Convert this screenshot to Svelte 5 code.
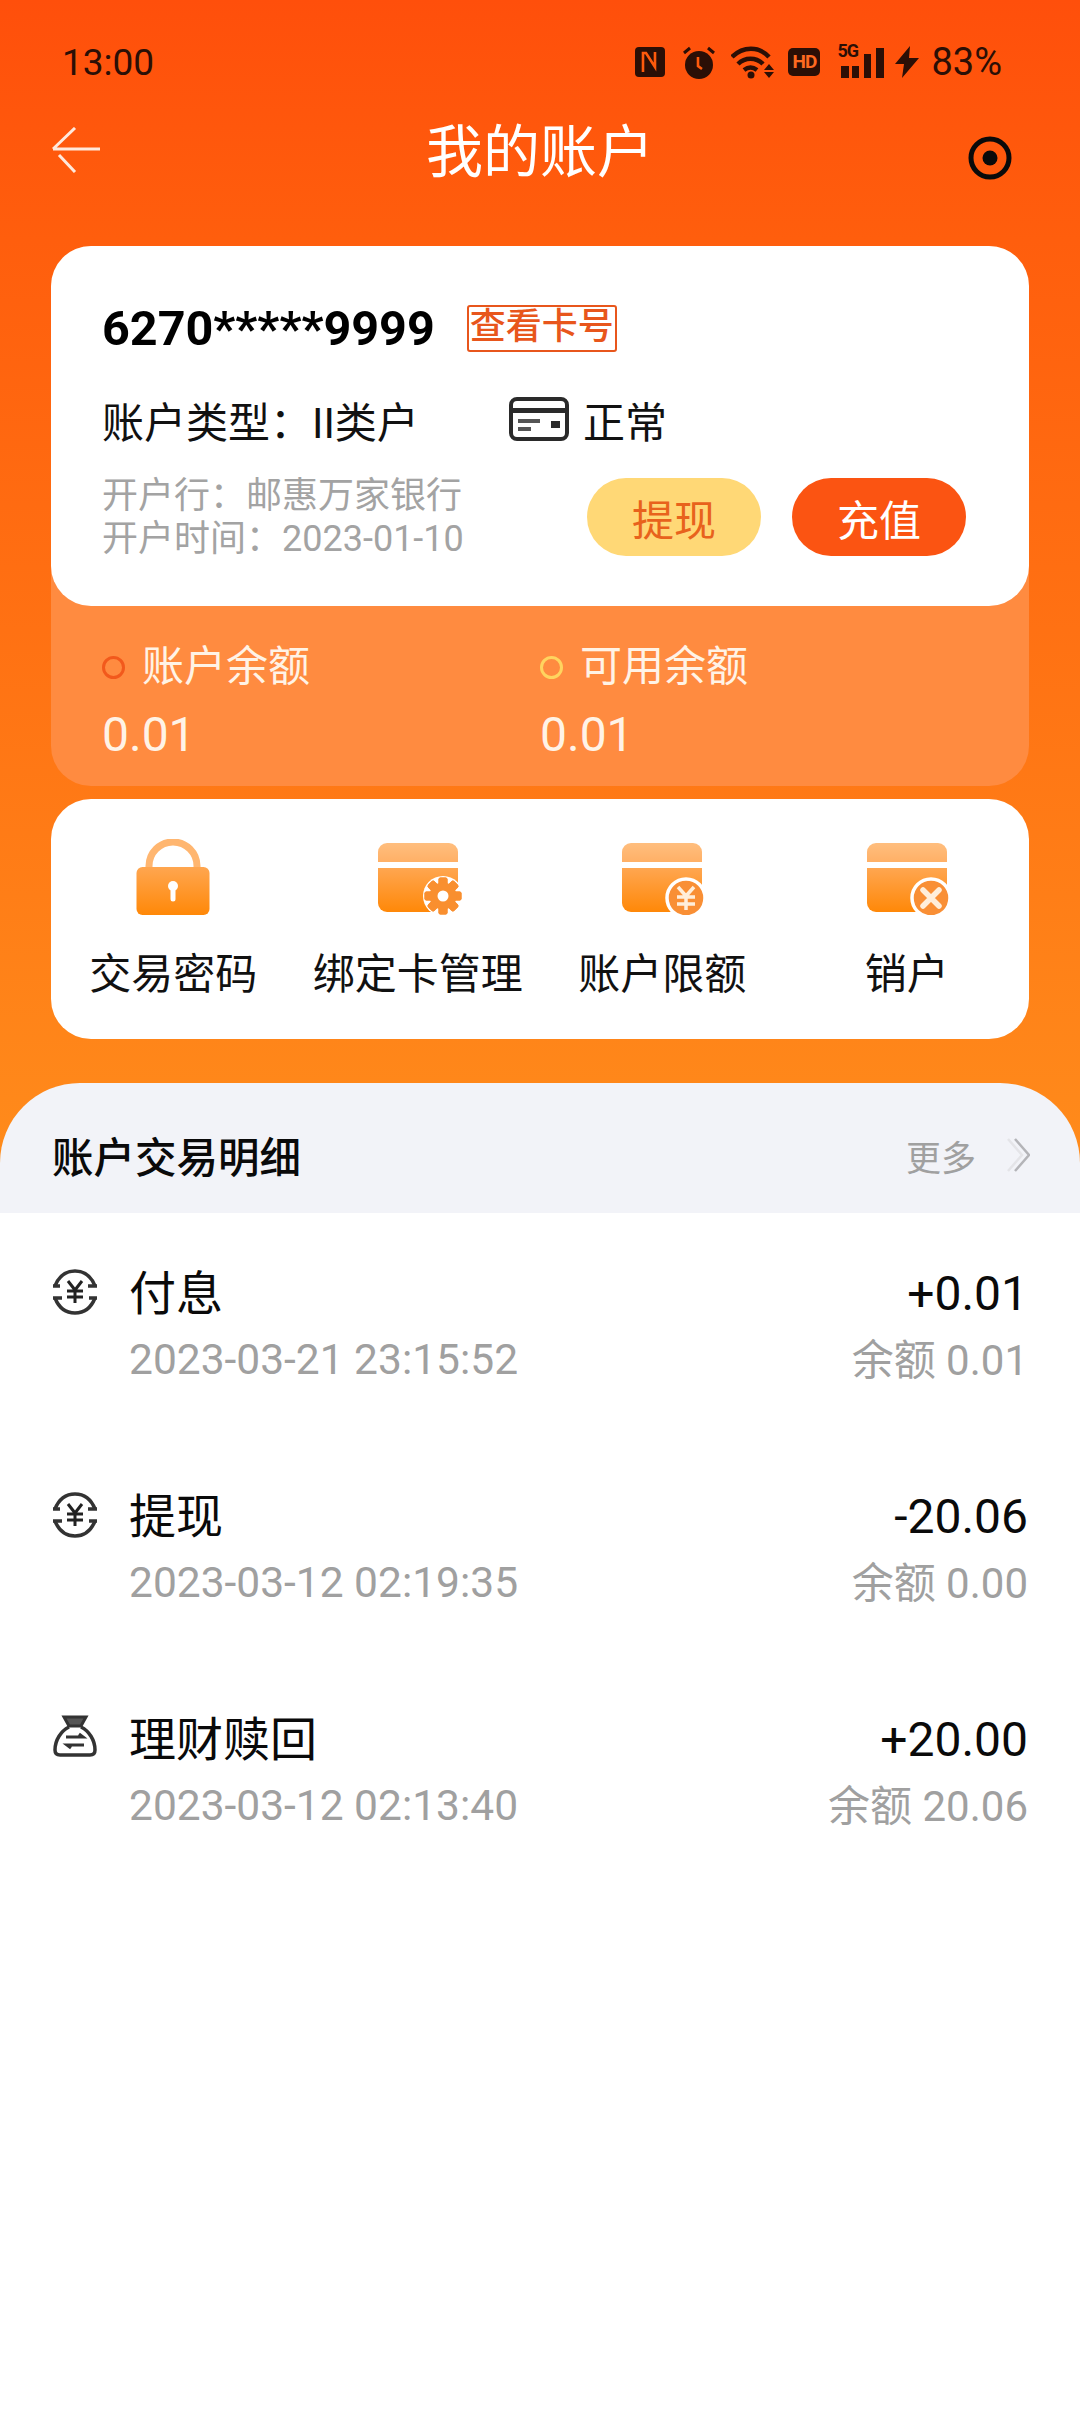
<script>
	const actions = [
		{ label: '交易密码', kind: 'lock' },
		{ label: '绑定卡管理', kind: 'gear' },
		{ label: '账户限额', kind: 'yen' },
		{ label: '销户', kind: 'close' }
	];

	const records = [
		{ title: '付息', time: '2023-03-21 23:15:52', amount: '+0.01', balance: '余额 0.01', icon: 'swap' },
		{ title: '提现', time: '2023-03-12 02:19:35', amount: '-20.06', balance: '余额 0.00', icon: 'swap' },
		{ title: '理财赎回', time: '2023-03-12 02:13:40', amount: '+20.00', balance: '余额 20.06', icon: 'bag' }
	];

	const teeth = [0, 45, 90, 135, 180, 225, 270, 315];
</script>

<div class="page">
	<div class="status">
		<span class="time">13:00</span>
		<div class="status-icons">
			<svg class="s-nfc" width="30" height="30" viewBox="0 0 30 30">
				<rect width="30" height="30" rx="4" fill="#2b0f06" />
				<path d="M8 25V6h3l9 14V5" fill="none" stroke="#ff5a0c" stroke-width="2.6" />
			</svg>
			<svg class="s-alarm" width="32" height="33" viewBox="0 0 32 33">
				<circle cx="16" cy="19" r="14" fill="#2b0f06" />
				<path d="M1 7l6-5M31 7l-6-5" stroke="#2b0f06" stroke-width="3" />
				<path d="M15 11v9l4 3" fill="none" stroke="#ff5a0c" stroke-width="2.6" />
			</svg>
			<svg class="s-wifi" width="44" height="33" viewBox="0 0 44 33">
				<path d="M1 11c11-11 27-11 37 0M7 18c7-7 18-7 25 0M13 24c4-3 9-3 13 0" fill="none" stroke="#2b0f06" stroke-width="4.500" />
				<circle cx="20" cy="29" r="3.500" fill="#2b0f06" />
				<path d="M33 24l5-6 5 6zM33 26l5 6 5-6z" fill="#2b0f06" />
			</svg>
			<span class="hd">HD</span>
			<div class="signal">
				<span class="fiveg">5G</span>
				<svg width="48" height="32" viewBox="0 0 48 32">
					<rect x="4" y="20" width="8" height="12" fill="#2b0f06" />
					<rect x="15" y="20" width="7" height="12" fill="#2b0f06" />
					<rect x="27" y="8" width="7" height="24" fill="#2b0f06" />
					<rect x="39" y="2" width="8" height="30" fill="#2b0f06" />
				</svg>
			</div>
			<svg class="s-bolt" width="24" height="32" viewBox="0 0 24 32">
				<path d="M15 0L0 18h9l-2 14L24 12h-10z" fill="#2b0f06" />
			</svg>
			<span class="battery">83%</span>
		</div>
	</div>

	<header class="nav">
		<svg class="back" width="48" height="46" viewBox="0 0 48 46">
			<path d="M1 22h47M1 22L23 1M7 28l16 17" fill="none" stroke="#ffe9dc" stroke-width="3" />
		</svg>
		<h1>我的账户</h1>
		<svg class="record" width="44" height="44" viewBox="0 0 44 44">
			<circle cx="22" cy="22" r="19" fill="none" stroke="#0a0a0a" stroke-width="5" />
			<circle cx="22" cy="22" r="7.500" fill="#0a0a0a" />
		</svg>
	</header>

	<section class="account">
		<div class="card">
			<div class="number-row">
				<span class="number">6270*****9999</span>
				<span class="view">查看卡号</span>
			</div>
			<div class="type-row">
				<span class="type">账户类型：II类户</span>
				<span class="state">
					<svg width="60" height="44" viewBox="0 0 60 44">
						<rect x="2" y="2" width="56" height="40" rx="6" fill="#fff" stroke="#2a2a2a" stroke-width="4" />
						<rect x="2" y="11" width="56" height="5" fill="#2a2a2a" />
						<rect x="9" y="22" width="22" height="4" fill="#555" />
						<rect x="9" y="30" width="13" height="4" fill="#555" />
						<rect x="42" y="24" width="9" height="7" fill="#2a2a2a" />
					</svg>
					正常
				</span>
			</div>
			<div class="bank-row">
				<div class="bank">
					<div>开户行：邮惠万家银行</div>
					<div>开户时间：<span class="num">2023-01-10</span></div>
				</div>
				<div class="buttons">
					<button class="pill withdraw">提现</button>
					<button class="pill deposit">充值</button>
				</div>
			</div>
		</div>
		<div class="balances">
			<div class="balance">
				<div class="balance-label"><i class="dot red"></i>账户余额</div>
				<div class="balance-value">0.01</div>
			</div>
			<div class="balance">
				<div class="balance-label"><i class="dot yellow"></i>可用余额</div>
				<div class="balance-value">0.01</div>
			</div>
		</div>
	</section>

	<section class="actions">
		{#each actions as a}
			<div class="action">
				<svg width="90" height="76" viewBox="0 0 90 76">
					<defs>
						<linearGradient id="top-{a.kind}" x1="0" y1="0" x2="0" y2="1">
							<stop offset="0" stop-color="#ffbe7e" />
							<stop offset="1" stop-color="#ffb066" />
						</linearGradient>
						<linearGradient id="body-{a.kind}" x1="0" y1="0" x2="0" y2="1">
							<stop offset="0" stop-color="#ffa650" />
							<stop offset="1" stop-color="#ff8808" />
						</linearGradient>
					</defs>
					{#if a.kind === 'lock'}
						<path d="M21 30V27a24 24 0 0 1 48 0v3" fill="none" stroke="#ffb670" stroke-width="7" />
						<rect x="8.500" y="28" width="73" height="48" rx="6" fill="url(#body-lock)" />
						<circle cx="45" cy="47" r="5" fill="#fff" />
						<path d="M45 47v13" stroke="#fff" stroke-width="5" stroke-linecap="round" />
					{:else}
						<path d="M5 23V13a9 9 0 0 1 9-9h62a9 9 0 0 1 9 9v10z" fill="url(#top-{a.kind})" />
						<path d="M5 29h80v35a9 9 0 0 1-9 9H14a9 9 0 0 1-9-9z" fill="url(#body-{a.kind})" />
						{#if a.kind === 'gear'}
							<circle cx="70" cy="57" r="20" fill="#fff" />
							{#each teeth as t}
								<rect x="65.500" y="38.500" width="9" height="37" rx="2" fill="#f98f2f" transform="rotate({t} 70 57)" />
							{/each}
							<circle cx="70" cy="57" r="13.500" fill="#f98f2f" />
							<circle cx="70" cy="57" r="5.500" fill="#fff" />
						{:else}
							<circle cx="69" cy="59" r="19" fill="#f98f35" stroke="#fff" stroke-width="3.500" />
							{#if a.kind === 'yen'}
								<path d="M61 48l8 9 8-9M60 58h18M60 65h18M69 57v14" fill="none" stroke="#ffeeda" stroke-width="3.500" />
							{:else}
								<path d="M61 51l16 16M77 51L61 67" fill="none" stroke="#ffeeda" stroke-width="5.500" stroke-linecap="round" />
							{/if}
						{/if}
					{/if}
				</svg>
				<span>{a.label}</span>
			</div>
		{/each}
	</section>

	<section class="sheet">
		<div class="sheet-head">
			<span class="sheet-title">账户交易明细</span>
			<span class="more">
				更多
				<svg width="24" height="36" viewBox="0 0 24 36">
					<path d="M2 2l14 16L2 34" fill="none" stroke="#e4e4e8" stroke-width="2.500" />
					<path d="M9 2l14 16L9 34" fill="none" stroke="#b4b4b8" stroke-width="2.500" />
				</svg>
			</span>
		</div>
		<div class="records">
			{#each records as r}
				<div class="record-row">
					<div class="record-icon">
						{#if r.icon === 'swap'}
							<svg width="46" height="46" viewBox="0 0 46 46">
								<path d="M3 17C7 7 14 2 23 2s16 5 20 15M43 29c-4 10-11 15-20 15S7 39 3 29" fill="none" stroke="#333" stroke-width="3.500" />
								<path d="M36 17h9M1 17h7M1 29h9M37 29h8" stroke="#333" stroke-width="3.500" />
								<path d="M16 12l7 9 7-9M15 22h16M15 28h16M23 21v13" fill="none" stroke="#222" stroke-width="3" />
							</svg>
						{:else}
							<svg width="46" height="42" viewBox="0 0 46 42">
								<path d="M12 2h22l-5 9H17z" fill="#555" stroke="#333" stroke-width="3" />
								<path d="M17 12C9 16 3 25 3 35q0 5 5 5h30q5 0 5-5c0-10-6-19-14-23" fill="none" stroke="#333" stroke-width="3.500" />
								<path d="M14 22h17l-4-3M32 30H15l4 3" fill="none" stroke="#333" stroke-width="3" />
							</svg>
						{/if}
					</div>
					<div class="record-main">
						<div class="record-title">{r.title}</div>
						<div class="record-time">{r.time}</div>
					</div>
					<div class="record-side">
						<div class="record-amount">{r.amount}</div>
						<div class="record-balance">{r.balance}</div>
					</div>
				</div>
			{/each}
		</div>
	</section>
</div>

<style>
	:global(body) {
		margin: 0;
		background: #fff;
	}

	.page {
		width: 1080px;
		height: 2412px;
		overflow: hidden;
		font-family: Roboto, "Noto Sans CJK SC", sans-serif;
		background: linear-gradient(180deg, #ff4f0b 0, #ff5e0d 240px, #ff8b1b 1160px) no-repeat;
		background-size: 100% 1213px;
	}

	.status {
		height: 62px;
		padding: 31px 78px 0 62px;
		display: flex;
		justify-content: space-between;
		align-items: center;
		color: #2b0f06;
	}

	.time {
		font-size: 37px;
		margin-top: 1px;
	}

	.status-icons {
		display: flex;
		align-items: center;
	}

	.s-alarm {
		margin-left: 18px;
	}

	.s-wifi {
		margin-left: 16px;
	}

	.hd {
		margin-left: 13px;
		width: 32px;
		height: 28px;
		background: #2b0f06;
		color: #ff6a20;
		border-radius: 5px;
		font-size: 19px;
		font-weight: 700;
		line-height: 28px;
		text-align: center;
		letter-spacing: -1px;
	}

	.signal {
		position: relative;
		margin-left: 17px;
		width: 48px;
		height: 32px;
	}

	.signal svg {
		display: block;
	}

	.fiveg {
		position: absolute;
		left: 0;
		top: -6px;
		font-size: 18px;
		font-weight: 700;
		letter-spacing: -1px;
	}

	.s-bolt {
		margin-left: 10px;
	}

	.battery {
		margin-left: 12px;
		font-size: 38px;
	}

	.nav {
		height: 153px;
		padding: 0 68px 0 52px;
		display: flex;
		align-items: center;
		justify-content: space-between;
		position: relative;
	}

	.nav h1 {
		margin: 0;
		font-size: 57px;
		font-weight: 400;
		color: #fff;
		position: absolute;
		left: 0;
		right: 0;
		top: 30px;
		text-align: center;
		line-height: 60px;
	}

	.back {
		margin-top: -40px;
	}

	.record {
		margin-top: -24px;
	}

	.account {
		margin: 0 51px;
		border-radius: 40px;
		background: #ff8b40;
		height: 540px;
	}

	.card {
		height: 360px;
		box-sizing: border-box;
		background: #fff;
		border-radius: 40px;
		padding: 57px 62px 0 51px;
	}

	.number-row {
		display: flex;
		align-items: center;
		height: 50px;
	}

	.number {
		font-size: 48.500px;
		font-weight: 700;
		color: #000;
	}

	.view {
		margin-left: 32px;
		box-sizing: border-box;
		width: 150px;
		height: 47px;
		border: 2px solid #e8561c;
		border-radius: 3px;
		color: #e8561c;
		font-size: 36px;
		font-weight: 500;
		line-height: 41px;
		text-align: center;
	}

	.type-row {
		display: flex;
		align-items: center;
		margin-top: 41px;
		height: 50px;
		font-size: 42px;
		color: #111;
	}

	.type {
		width: 407px;
	}

	.state {
		display: flex;
		align-items: center;
		gap: 14px;
	}

	.bank-row {
		display: flex;
		justify-content: space-between;
		align-items: center;
		margin-top: 29px;
	}

	.bank {
		font-size: 36px;
		line-height: 43px;
		color: #a3a3a3;
		margin-top: 2px;
	}

	.buttons {
		display: flex;
		gap: 31px;
		margin-right: 1px;
	}

	.pill {
		width: 174px;
		height: 78px;
		border: 0;
		border-radius: 39px;
		font: inherit;
		font-size: 42px;
		padding: 0;
	}

	.withdraw {
		background: #ffd876;
		color: #e8621c;
	}

	.deposit {
		background: #fb5412;
		color: #fff;
	}

	.balances {
		display: grid;
		grid-template-columns: 438px 1fr;
		padding: 34px 51px 0;
		color: #fff3e6;
	}

	.balance-label {
		display: flex;
		align-items: center;
		font-size: 42px;
		line-height: 54px;
	}

	.dot {
		width: 23px;
		height: 23px;
		box-sizing: border-box;
		border-radius: 50%;
		border: 3px solid;
		margin-right: 17px;
	}

	.red {
		border-color: #f2591c;
	}

	.yellow {
		border-color: #ffd45f;
	}

	.balance-value {
		font-size: 48px;
		line-height: 54px;
		margin-top: 14px;
	}

	.actions {
		margin: 13px 51px 0;
		height: 240px;
		background: #fff;
		border-radius: 40px;
		display: grid;
		grid-template-columns: repeat(4, 1fr);
	}

	.action {
		display: flex;
		flex-direction: column;
		align-items: center;
		padding-top: 40px;
		font-size: 42px;
		color: #111;
	}

	.action span {
		margin-top: 30px;
		line-height: 60px;
	}

	.sheet {
		margin-top: 44px;
	}

	.sheet-head {
		height: 130px;
		box-sizing: border-box;
		background: #f2f3f8;
		border-radius: 80px 80px 0 0;
		padding: 14px 50px 0 52px;
		display: flex;
		justify-content: space-between;
		align-items: center;
	}

	.sheet-title {
		font-size: 41.500px;
		font-weight: 500;
		color: #0a0a0a;
	}

	.more {
		display: flex;
		align-items: center;
		gap: 30px;
		font-size: 35px;
		color: #a0a0a0;
	}

	.records {
		background: #fff;
		padding: 0 52px;
	}

	.record-row {
		display: flex;
		height: 223px;
		box-sizing: border-box;
		padding-top: 48px;
	}

	.record-icon {
		width: 77px;
		padding-top: 8px;
	}

	.record-main {
		flex: 1;
	}

	.record-title {
		font-size: 47px;
		line-height: 66px;
		color: #0a0a0a;
	}

	.record-time {
		font-size: 42.500px;
		line-height: 56px;
		margin-top: 5px;
		color: #a0a0a0;
	}

	.record-side {
		text-align: right;
	}

	.record-amount {
		font-size: 48px;
		line-height: 66px;
		color: #0a0a0a;
	}

	.record-balance {
		font-size: 42px;
		line-height: 56px;
		margin-top: 6px;
		color: #a0a0a0;
	}
</style>
